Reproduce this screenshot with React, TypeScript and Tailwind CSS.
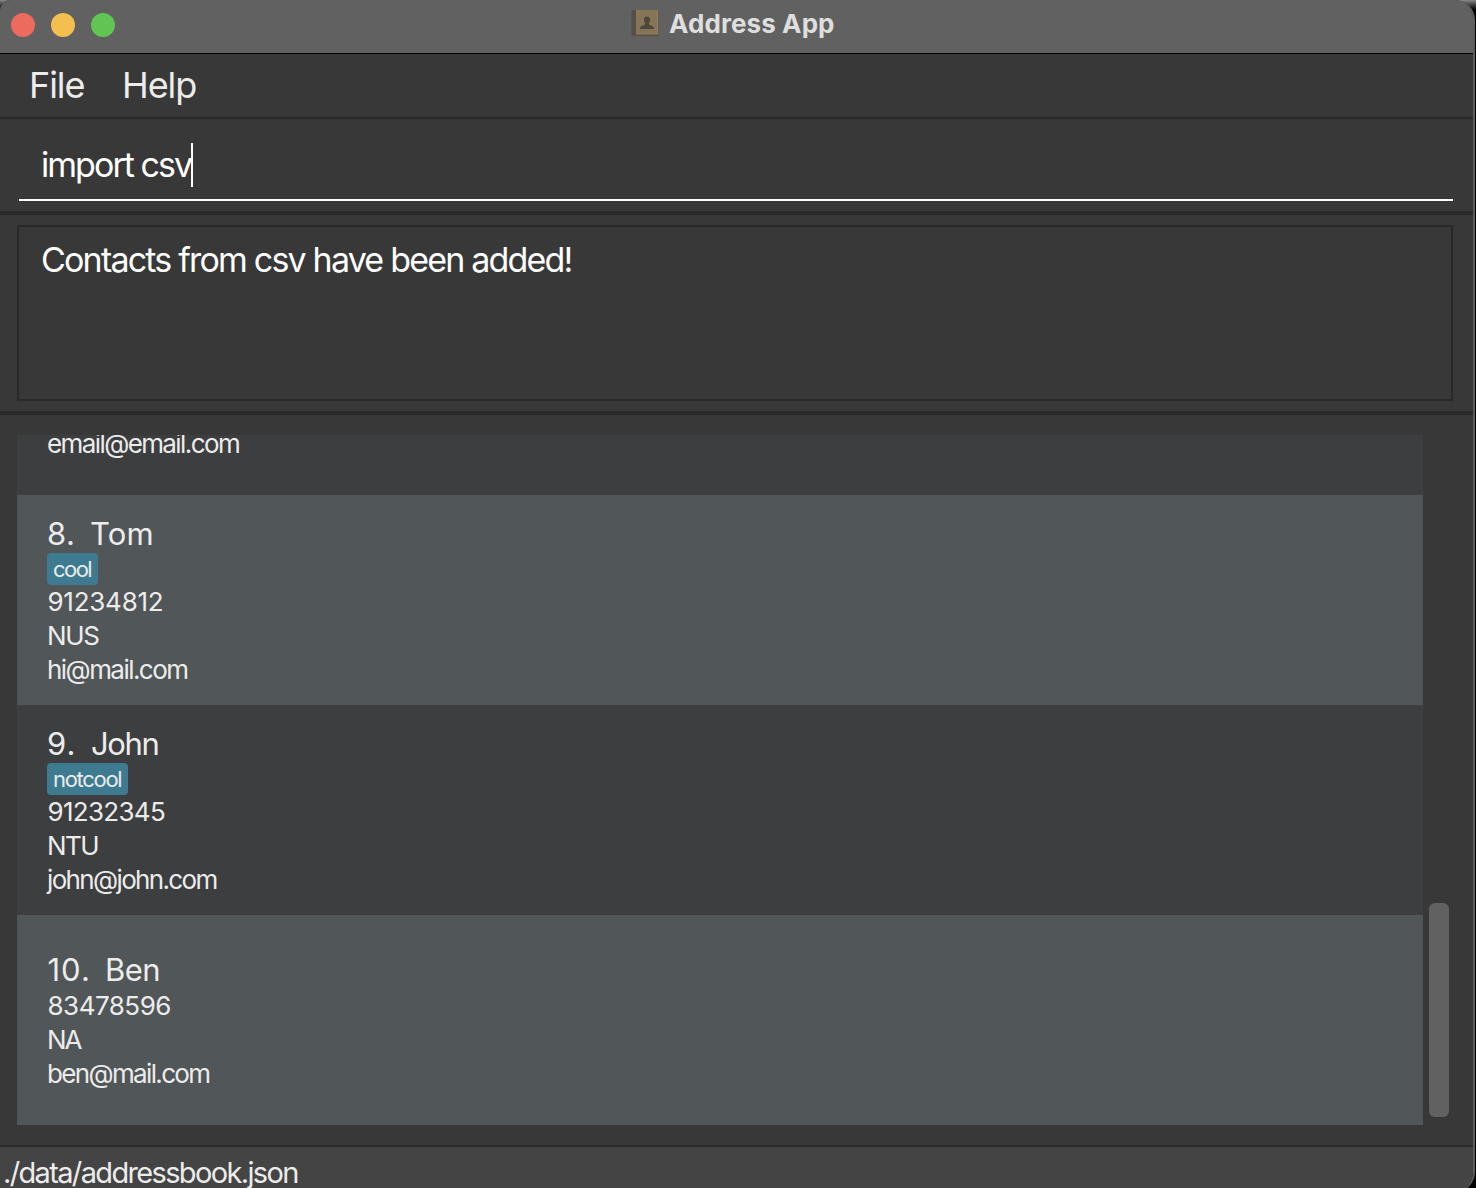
type Field = { text: string; className: string };

type Contact = {
  index: Field;
  name: Field;
  tag?: Field;
  details: Field[];
  shaded: boolean;
};

const contacts: Contact[] = [
  {
    index: { text: '8.', className: 'w-[43px] tracking-[0.5px]' },
    name: { text: 'Tom', className: 'tracking-[0.1px]' },
    tag: { text: 'cool', className: 'w-[51px] tracking-[-1.55px]' },
    details: [
      { text: '91234812', className: 'ml-[0.5px] tracking-[-0.25px]' },
      { text: 'NUS', className: 'tracking-[-1.3px]' },
      { text: 'hi@mail.com', className: 'tracking-[-1.55px]' },
    ],
    shaded: true,
  },
  {
    index: { text: '9.', className: 'w-11 tracking-[1px]' },
    name: { text: 'John', className: 'tracking-[-1.4px]' },
    tag: { text: 'notcool', className: 'w-[81px] tracking-[-1.3px]' },
    details: [
      { text: '91232345', className: 'ml-[0.5px] tracking-[-0.7px]' },
      { text: 'NTU', className: 'tracking-[-1.5px]' },
      { text: 'john@john.com', className: 'tracking-[-1.65px]' },
    ],
    shaded: false,
  },
  {
    index: { text: '10.', className: 'ml-[0.5px] w-[57.5px] tracking-[1px]' },
    name: { text: 'Ben', className: 'tracking-[-0.6px]' },
    details: [
      { text: '83478596', className: 'ml-[0.5px] tracking-[-0.5px]' },
      { text: 'NA', className: 'tracking-[-2px]' },
      { text: 'ben@mail.com', className: 'tracking-[-1.65px]' },
    ],
    shaded: true,
  },
];

function BookIcon() {
  return (
    <svg width="28" height="28" viewBox="0 0 28 28" className="shrink-0">
      <rect x="0.5" y="1" width="27" height="26" rx="1.5" fill="#594f43" />
      <rect x="1" y="1.5" width="3.5" height="24" rx="1" fill="#554f4a" />
      <rect x="5" y="1.5" width="22" height="23.5" rx="0.8" fill="#857556" />
      <path d="M5 1.8h22M26.6 2v23M5 25h22" stroke="#9a8660" strokeWidth="0.8" fill="none" />
      <path
        d="M16 7.500c-2.200 0-3.200 1.600-3 3.800.1 1.400.8 2.300 1.200 3 .2 1.200-.5 1.600-2 2.200-2.200.8-3.200 1.300-3.200 3.500h14c0-2.200-1-2.700-3.200-3.500-1.500-.6-2.200-1-2-2.200.4-.7 1.100-1.600 1.200-3 .2-2.200-.8-3.800-3-3.800z"
        fill="#4d463a"
      />
    </svg>
  );
}

function ContactCard({ contact }: { contact: Contact }) {
  return (
    <div
      className={`flex h-[210px] shrink-0 flex-col items-start justify-center pt-0.5 pl-[30px] ${
        contact.shaded ? 'bg-[#515658]' : 'bg-[#3c3e3f]'
      }`}
    >
      <div className="flex text-[31px] leading-[38px]">
        <span className={contact.index.className}>{contact.index.text}</span>
        <span className={contact.name.className}>{contact.name.text}</span>
      </div>
      {contact.tag && (
        <span
          className={`h-8 rounded-[4px] bg-[#3e7b91] pl-[6px] text-[22px] leading-8 whitespace-nowrap ${contact.tag.className}`}
        >
          {contact.tag.text}
        </span>
      )}
      {contact.details.map((detail) => (
        <span key={detail.text} className={`text-[26px] leading-[34px] ${detail.className}`}>
          {detail.text}
        </span>
      ))}
    </div>
  );
}

export default function App() {
  return (
    <div className="h-[1188px] w-[1476px] overflow-hidden bg-gradient-to-b from-[#8a8a8a] via-black via-[1%] to-black font-[Inter,sans-serif] text-[#ececec]">
      <div className="flex h-[1192px] w-[1475px] flex-col overflow-hidden rounded-t-[20px] rounded-tl-[11px] rounded-b-[20px] rounded-bl-none border-r-2 border-[#5c5c5c] bg-[#383838]">
        <header className="flex h-[54px] shrink-0 items-center border-b border-black bg-[#616161] pb-1">
          <div className="flex w-[631px] gap-4 pl-[11px]">
            <span className="size-6 rounded-full bg-[#ed6a5e]" />
            <span className="size-6 rounded-full bg-[#f5bf4f]" />
            <span className="size-6 rounded-full bg-[#61c554]" />
          </div>
          <div className="mt-[-3px] flex items-center gap-[10px]">
            <BookIcon />
            <h1 className="pt-px text-[26px] leading-8 font-bold tracking-[0.1px] text-[#dedede]">Address App</h1>
          </div>
        </header>

        <nav className="flex h-[65px] shrink-0 border-b-2 border-[#2a2a2a] pl-[29px] text-[36px] leading-[62px]">
          <span className="w-[93px] tracking-[-1.1px]">File</span>
          <span className="tracking-[-1.1px]">Help</span>
        </nav>

        <section className="h-24 shrink-0 border-b-4 border-[#2a2a2a] pr-5 pl-[19px]">
          <div className="flex h-[82px] items-center border-b-2 border-white pt-[11px] pl-[22px] text-[34px] text-white">
            <span className="w-[150px] tracking-[-1.95px] whitespace-nowrap">import csv</span>
            <span className="h-11 w-0.5 bg-white" />
          </div>
        </section>

        <section className="h-[200px] shrink-0 border-b-4 border-[#2a2a2a] pt-[10px] pr-5 pl-[17px]">
          <div className="h-[176px] border-2 border-[#292929] pt-[13px] pl-[22px] text-[34px] leading-10 tracking-[-1.8px] text-white">
            Contacts from csv have been added!
          </div>
        </section>

        <main className="flex h-[730px] shrink-0 gap-[6px] pt-5 pl-[17px]">
          <div className="flex h-[690px] w-[1406px] flex-col overflow-hidden">
            <div className="h-[60px] shrink-0 overflow-hidden bg-[#3c3e3f] pl-[30px]">
              <div className="mt-[-8px] text-[26px] leading-[34px] tracking-[-1.6px]">email@email.com</div>
            </div>
            {contacts.map((contact) => (
              <ContactCard key={contact.name.text} contact={contact} />
            ))}
          </div>
          <div className="flex h-[690px] w-5 flex-col justify-end pb-2">
            <div className="h-[214px] rounded-[6px] bg-[#616161]" />
          </div>
        </main>

        <footer className="h-[47px] shrink-0 border-t-2 border-[#2a2a2a] bg-[#444444] pl-[3px] text-[29px] leading-[51px] tracking-[-1.65px]">
          ./data/addressbook.json
        </footer>
      </div>
    </div>
  );
}
